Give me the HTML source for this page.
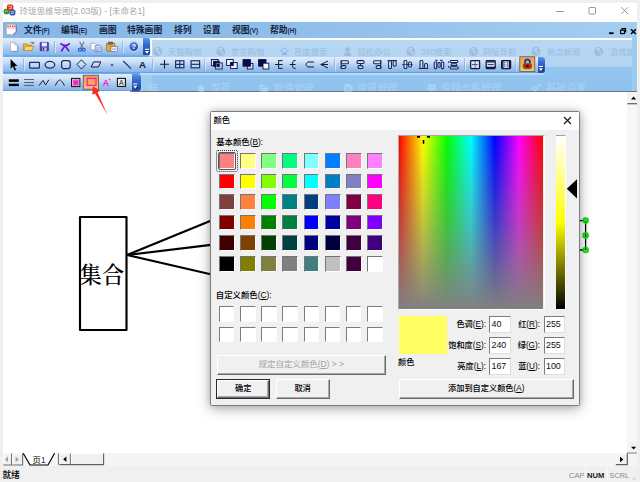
<!DOCTYPE html>
<html lang="zh">
<head>
<meta charset="utf-8">
<title>玲珑思维导图</title>
<style>
*{box-sizing:border-box;margin:0;padding:0}
html,body{width:640px;height:482px;overflow:hidden;background:#f0f0f0}
body{font-family:"Liberation Sans","Noto Sans CJK SC",sans-serif;font-size:9px;color:#000;position:relative}
#win{position:absolute;left:0;top:0;width:640px;height:482px;background:#efefef;overflow:hidden}
.ov{position:absolute;left:0;top:0;pointer-events:none}
#title{position:absolute;left:3px;top:3px;width:634px;height:19px;background:#fff}
#title .t{position:absolute;left:16.5px;top:2px;font-size:8.5px;color:#a6a6a6;white-space:nowrap;line-height:13px}
#title .t b{font-weight:normal;font-size:8.7px}
#menu{position:absolute;left:3px;top:22px;width:634px;height:16px;background:linear-gradient(90deg,#85b6e7 0%,#8fbeeb 45%,#a6cdf1 100%)}
#menu span{position:absolute;top:2px;font-size:8.8px;line-height:12px;color:#17233f;white-space:nowrap;font-weight:700}
#menu span i{font-style:normal;font-size:6.3px;font-weight:700;position:relative;top:0.4px}
#tbarea{position:absolute;left:3px;top:38px;width:634px;height:53px;background:#9fcaf0}
#wmpanel{position:absolute;left:149px;top:0;width:480px;height:53px;overflow:hidden;background:linear-gradient(180deg,#fff 0.6px,#fff 2.2px,#b7d7f3 2.4px,#b3d4f2 28.4px,#93c5f0 29px,#8fc2ef 53px)}
.wm{position:absolute;white-space:nowrap}
.wm1{color:#99bbdd;top:8.9px;font-size:8.3px;line-height:10px}
.wm2{color:#a4cef3;top:44.5px;font-size:10.1px;line-height:12px;font-weight:bold}
.tb{position:absolute;left:0;background:linear-gradient(180deg,#dfecfc 0%,#cde1f8 30%,#a9cbf1 60%,#86b5e9 100%);border-bottom:1px solid #6a9fdd;border-radius:0 3px 3px 0;box-shadow:0 1.5px 1.5px rgba(196,224,250,.85)}
.grip{position:absolute;top:0;width:7px;background:linear-gradient(180deg,#5f95e6 0%,#2f69cd 38%,#1a48ad 100%);border-radius:0 3px 3px 0}
#canvas{position:absolute;left:3px;top:91.3px;width:625px;height:361.7px;background:#fff}
#topline{position:absolute;left:130px;top:90.8px;width:507px;height:1.2px;background:#737373}
#vscroll{position:absolute;left:627.3px;top:92px;width:9.7px;height:361px;background:#f8f8f8}
#tabbar{position:absolute;left:3px;top:453px;width:634px;height:13px;background:#f5f5f5;z-index:3;background:transparent}
#tabbg{position:absolute;left:3px;top:453px;width:634px;height:13px;background:#f5f5f5}
#status{position:absolute;left:3px;top:466px;width:634px;height:16px;background:#f0f0f0}
#status span{position:absolute;font-size:7.6px;line-height:10px;white-space:nowrap}
/* dialog */
#dlg{position:absolute;left:210px;top:111px;width:370px;height:295px;background:#f0f0f0;border:1px solid #7d7d7d;border-radius:1.5px;box-shadow:0 3px 13px rgba(0,0,0,.3),0 0 6px rgba(0,0,0,.16)}
#dlg .in{position:absolute;left:-211px;top:-112px;width:0;height:0}
#dlg .cap{position:absolute;left:211px;top:112px;width:368px;height:18px;background:#fff}
.lbl{position:absolute;font-size:8.2px;line-height:11px;white-space:nowrap;color:#000;font-weight:500}
.lbl u{text-decoration:underline;text-underline-offset:1px}
.lbl.r{text-align:right}
.sw{position:absolute;width:15.9px;height:15.9px;border:1px solid;border-color:#74747e #fdfdfd #fdfdfd #74747e}
.sw.cu{width:15.6px;height:15.7px;border-width:1.5px 1px 1px 1.5px;border-color:#7c7c7c #fdfdfd #fdfdfd #7c7c7c}
.sel{position:absolute;left:218px;top:152px;width:17.8px;height:18.3px;border:1.6px solid #505357;border-radius:2px}
.btn{position:absolute;background:#f0f0f0;border-style:solid;border-width:1px 1.5px 1.5px 1px;border-color:#fff #6a6a6a #6a6a6a #fff;font-size:8.2px;font-weight:500;text-align:center;white-space:nowrap;color:#000;box-shadow:inset -1px -1px 0 #a8a8a8}
.btn.def{outline:1px solid #2a2a2a}
.btn.dis{color:#a3a3a3;font-weight:400;font-size:8.45px}
.edit{position:absolute;background:#fff;border-style:solid;border-width:1.4px 1px 1px 1.4px;border-color:#7c7c7c #dedede #dedede #7c7c7c;font-size:8.9px;line-height:15.4px;padding-left:1.5px;white-space:nowrap;color:#111}

#wml{position:absolute;left:147.2px;top:0.2px;width:2px;height:17.6px;background:#f6fafe}
.gap{position:absolute;left:0;background:#6fa9e7}

</style>
</head>
<body>
<div id="win">
  <div id="title"><span class="t">玲珑思维导图<b>(2.03</b>版<b>) - [</b>未命名<b>1]</b></span></div>
  <div id="menu">
    <span style="left:21px">文件<i>(F)</i></span>
    <span style="left:58px">编辑<i>(E)</i></span>
    <span style="left:96px">画图</span>
    <span style="left:124px">特殊画图</span>
    <span style="left:171px">排列</span>
    <span style="left:200px">设置</span>
    <span style="left:229px">视图<i>(V)</i></span>
    <span style="left:267px">帮助<i>(H)</i></span>
  </div>
  <div id="tbarea">
    <div id="wmpanel">
      <span class="wm wm1" style="left:16.0px">天猫购物</span>
      <span class="wm wm1" style="left:79.0px">京东购物</span>
      <span class="wm wm1" style="left:142.0px">百度搜索</span>
      <span class="wm wm1" style="left:205.5px">轻松办公</span>
      <span class="wm wm1" style="left:269.0px">360搜索</span>
      <span class="wm wm1" style="left:331.0px">网址导航</span>
      <span class="wm wm1" style="left:395.0px">热点新闻</span>
      <span class="wm wm1" style="left:458.0px">游戏娱乐</span>
      <span class="wm wm2" style="left:58.5px">首页</span>
      <span class="wm wm2" style="left:121.8px">软件管理</span>
      <span class="wm wm2" style="left:205.0px">资讯管理</span>
      <span class="wm wm2" style="left:288.5px">专题合集管理</span>
      <span class="wm wm2" style="left:394.0px">基础设置</span>
    </div>
    <div id="wml"></div>
    <div class="tb" id="tb1" style="top:0;width:147px;height:17.6px"><div class="grip" style="left:140px;height:17.2px"></div></div>
    <div class="tb" id="tb2" style="top:18.6px;width:542px;height:16.8px"><div class="grip" style="left:535px;height:16.4px"></div></div>
    <div class="tb" id="tb3" style="top:36.4px;width:138px;height:16.8px"><div class="grip" style="left:128.5px;width:9.5px;height:16.6px"></div></div>
    <div class="gap" style="top:16.8px;width:146px;height:1.9px"></div>
    <div class="gap" style="top:34.6px;width:137px;height:1.9px"></div>
  </div>
  <div id="canvas"></div>
  <div id="vscroll"></div>
  <div id="topline"></div>
  <div id="tabbg"></div>
  <div id="tabbar">
    <span style="position:absolute;left:29.6px;top:1.6px;font-size:8.3px;line-height:10px;z-index:3">页<b style="font-weight:500;color:#1d1d4a">1</b></span>
  </div>
  <div id="status">
    <span style="left:-0.6px;top:4.3px;font-size:8.7px;font-weight:500">就绪</span>
    <span style="left:566px;top:5px;color:#8a8a8a">CAP</span>
    <span style="left:584px;top:5px;color:#1a1a2a;font-weight:bold">NUM</span>
    <span style="left:606.6px;top:5px;color:#8a8a8a;font-size:7.3px">SCRL</span>
  </div>

<svg id="icons" class="ov" width="640" height="482" viewBox="0 0 640 482">
<defs>
  <linearGradient id="og" x1="0" y1="0" x2="0" y2="1"><stop offset="0" stop-color="#f2a043"/><stop offset="0.5" stop-color="#f6ad4c"/><stop offset="1" stop-color="#f9c878"/></linearGradient>
  <radialGradient id="hg" cx="0.4" cy="0.35" r="0.7"><stop offset="0" stop-color="#5a8df0"/><stop offset="1" stop-color="#1440a8"/></radialGradient>
  <linearGradient id="sepg" x1="0" y1="0" x2="0" y2="1"><stop offset="0" stop-color="#8aa9d6"/><stop offset="1" stop-color="#5f86c4"/></linearGradient>
</defs>
<!-- watermark icons -->
<g id="wmicons">
<circle cx="157.6" cy="51.6" r="4.5" fill="#9cbddd"/><path d="M155.0 50.2 q1.4 -2.6 3.6 -1.6 q-0.4 1.6 -2 1.8 q0.2 1.8 2.6 1.6 q1 1.4 -0.4 2.6" stroke="#c4dcf3" stroke-width="1" fill="none"/>
<circle cx="220.8" cy="51.6" r="4.5" fill="#9cbddd"/><path d="M218.2 50.2 q1.4 -2.6 3.6 -1.6 q-0.4 1.6 -2 1.8 q0.2 1.8 2.6 1.6 q1 1.4 -0.4 2.6" stroke="#c4dcf3" stroke-width="1" fill="none"/>
<circle cx="410.8" cy="51.6" r="4.5" fill="#9cbddd"/><path d="M408.2 50.2 q1.4 -2.6 3.6 -1.6 q-0.4 1.6 -2 1.8 q0.2 1.8 2.6 1.6 q1 1.4 -0.4 2.6" stroke="#c4dcf3" stroke-width="1" fill="none"/>
<circle cx="473.4" cy="51.6" r="4.5" fill="#9cbddd"/><path d="M470.8 50.2 q1.4 -2.6 3.6 -1.6 q-0.4 1.6 -2 1.8 q0.2 1.8 2.6 1.6 q1 1.4 -0.4 2.6" stroke="#c4dcf3" stroke-width="1" fill="none"/>
<circle cx="536.0" cy="51.6" r="4.5" fill="#9cbddd"/><path d="M533.4 50.2 q1.4 -2.6 3.6 -1.6 q-0.4 1.6 -2 1.8 q0.2 1.8 2.6 1.6 q1 1.4 -0.4 2.6" stroke="#c4dcf3" stroke-width="1" fill="none"/>
<circle cx="598.6" cy="51.6" r="4.5" fill="#9cbddd"/><path d="M596.0 50.2 q1.4 -2.6 3.6 -1.6 q-0.4 1.6 -2 1.8 q0.2 1.8 2.6 1.6 q1 1.4 -0.4 2.6" stroke="#c4dcf3" stroke-width="1" fill="none"/>
<g fill="#93b4ea"><circle cx="281.4" cy="51" r="1"/><circle cx="283.2" cy="48.6" r="1"/><circle cx="285.8" cy="48.6" r="1"/><circle cx="287.6" cy="51" r="1"/><path d="M281.8 54.8 q0.4 -3 2.7 -3 q2.3 0 2.7 3 q-1.2 1.2 -2.7 0.2 q-1.5 1 -2.7 -0.2z"/></g>
<g fill="#9cbddd"><circle cx="347.6" cy="49.6" r="2.3"/><path d="M343.8 56 q0.2 -4 3.8 -4 q3.6 0 3.8 4z"/></g>
<g fill="#acd2f5" stroke="none">
<rect x="146" y="84.2" width="11" height="1.5"/><rect x="149" y="86.8" width="8" height="1.5"/><rect x="149" y="89.3" width="8" height="1.5"/><rect x="146" y="86.8" width="1.8" height="1.5"/>
<path d="M197 88.4 L201.2 84.2 L205.4 88.4 H204 V91.5 H198.4 V88.4 Z"/>
<path d="M259.4 84.6 H262.6 L263.6 85.8 H267.4 V87 H261.2 L259.4 91.5 Z M261.8 87.8 H269.4 L267.6 91.5 H260.2 Z"/>
<path d="M344.4 84 H349.6 L352.4 86.8 V91.5 H344.4 Z"/>
<path d="M427.6 85.4 q0 -1.2 1.2 -1.2 h5.6 q1.2 0 1.2 1.2 v3.8 q0 1.2 -1.2 1.2 h-1.6 l-1.4 1.2 l-1 -1.2 h-1.6 q-1.2 0 -1.2 -1.2z"/>
<circle cx="535" cy="88.6" r="2.6"/><circle cx="539.4" cy="85.4" r="1.8"/>
</g>
<g fill="#8fc2ef"><circle cx="535" cy="88.6" r="1"/><circle cx="539.4" cy="85.4" r="0.7"/><rect x="346" y="87.6" width="4.6" height="0.9"/><rect x="346" y="89.4" width="4.6" height="0.9"/><path d="M429.8 86.6 l1.8 1.8 l1.8 -1.8" stroke="#8fc2ef" stroke-width="0.9" fill="none"/></g>
</g>
<!-- app icon -->
<g>
  <rect x="3.7" y="8.7" width="5.6" height="5.5" rx="1.6" fill="#3c962c"/>
  <rect x="9.4" y="9.5" width="6" height="5.9" rx="1.7" fill="#2a62b4"/>
  <rect x="6.9" y="4.6" width="6.5" height="5.9" rx="1.7" fill="#d9301f"/>
  <path d="M8.6 6.6 H11.6 V8.4 H8.8" stroke="#f7c6bf" stroke-width="0.8" fill="none"/>
  <path d="M5 11.8 L6.4 10.6 L7.8 11.8" stroke="#b4e2a6" stroke-width="0.8" fill="none"/>
  <path d="M11.2 13.4 V11.6 H13.4 V13.4 Z" stroke="#a9c8f2" stroke-width="0.8" fill="none"/>
  <path d="M7.4 5.2 Q10 4.6 12.8 5.2" stroke="#f08a7c" stroke-width="0.7" fill="none"/>
</g>
<!-- window buttons -->
<g stroke="#9a9a9a" stroke-width="1" fill="none">
  <path d="M556 11.5 H564"/>
  <rect x="589" y="7.5" width="6.5" height="6.5" rx="0.6"/>
  <path d="M621.3 7.3 L628 14 M628 7.3 L621.3 14"/>
</g>
<!-- mdi doc icon -->
<g>
  <path d="M6.2 24.2 H16 V32 Q14 33.4 12.6 35.4 Q10 34 6.2 35 Z" fill="#fcfcfd" stroke="#8f98aa" stroke-width="0.7"/>
  <path d="M16.4 25 V32.4 Q14.4 33.8 13 35.8" fill="none" stroke="#6c7486" stroke-width="0.8"/>
  <path d="M7.2 25.4 h1.6 v1.8 h-1.6z M9.6 25.4 h1.6 v1.8 h-1.6z M12 25.4 h1.6 v1.8 h-1.6z M14.2 25.4 h1.2 v1.8 h-1.2z" fill="#e5483e"/>
  <path d="M7.2 28.4 H15.2" stroke="#f0a8a2" stroke-width="0.7"/>
  <path d="M12.6 35.4 Q12.4 33 16 32 Z" fill="#cdd4e0" stroke="#8f98aa" stroke-width="0.5"/>
</g>
<!-- mdi buttons -->
<g stroke="#000" fill="none">
  <path d="M609 33.2 H613.6" stroke-width="1.8"/>
  <rect x="620.6" y="30.2" width="3.8" height="3.4" stroke-width="1.1"/>
  <path d="M622 30 V28.6 H625.6 V32 H624.6" stroke-width="1.1"/>
  <path d="M631 29.2 L635.8 34 M635.8 29.2 L631 34" stroke-width="1.5"/>
</g>

<!-- ===== toolbar 1 ===== -->
<g>
  <!-- new -->
  <path d="M10.5 42.4 H14.8 L17.3 44.9 V51.1 H10.5 Z" fill="#fff" stroke="#9aa3b8" stroke-width="0.6"/>
  <path d="M14.8 42.4 V44.9 H17.3 Z" fill="#d5dbe8" stroke="#9aa3b8" stroke-width="0.5"/>
  <path d="M17.8 45.4 V51.6 H11.2" stroke="#7d8598" stroke-width="0.8" fill="none" opacity=".75"/>
  <!-- open -->
  <path d="M23.4 50.5 V43.8 H26.6 L27.6 44.9 H31.8 V46.4" fill="#e9b738" stroke="#a87516" stroke-width="0.6"/>
  <path d="M23.4 50.5 L25.6 46.3 H34 L31.8 50.5 Z" fill="#fcd669" stroke="#a87516" stroke-width="0.6"/>
  <path d="M30.2 42.6 Q32 41.6 33.4 43 M33.6 41.8 V43.4 H32" stroke="#25408c" stroke-width="0.6" fill="none"/>
  <!-- save -->
  <rect x="40" y="42.3" width="8.6" height="8.6" rx="0.6" fill="#4c43c6" stroke="#2e2890" stroke-width="0.5"/>
  <rect x="41.7" y="42.6" width="5.2" height="3.8" fill="#eceefa"/>
  <rect x="42.2" y="47.6" width="4.3" height="3.2" fill="#c9cbdc"/>
  <rect x="42.8" y="48.1" width="1.4" height="2.3" fill="#2a2a3a"/>
  <!-- sep -->
  <path d="M54.5 41 V52.5" stroke="#7fa0d0" stroke-width="0.8"/><path d="M55.3 41.5 V53" stroke="#eaf3fd" stroke-width="0.8"/>
  <!-- purple cut -->
  <g stroke="#6a12d8" stroke-width="1.6" fill="none" stroke-linecap="round">
    <path d="M60.9 43.7 Q65.1 47.6 69.4 43.7"/>
    <path d="M65.1 45.6 L61.6 50.8 M65.1 45.6 L68.7 50.8"/>
  </g>
  <!-- scissors -->
  <path d="M79.6 41.8 L83.2 48.4 M84 41.8 L80.4 48.4" stroke="#6a7488" stroke-width="1.1" fill="none"/>
  <circle cx="79.9" cy="49.8" r="1.5" stroke="#2352c8" stroke-width="1.1" fill="none"/>
  <circle cx="83.7" cy="49.8" r="1.5" stroke="#2352c8" stroke-width="1.1" fill="none"/>
  <!-- copy -->
  <path d="M91 43.2 H95.2 L96.8 44.8 V49.8 H91 Z" fill="#fff" stroke="#7d91bc" stroke-width="0.6"/>
  <path d="M95 45.4 H99.3 L101 47 V51.6 H95 Z" fill="#e2eafb" stroke="#4563a8" stroke-width="0.6"/>
  <path d="M96 47.8 H99.8 M96 49.2 H99.8 M96 50.4 H98.6" stroke="#4a6bc0" stroke-width="0.5"/>
  <!-- paste -->
  <rect x="106.5" y="43" width="8.4" height="8.2" rx="0.6" fill="#e2a831" stroke="#93610f" stroke-width="0.6"/>
  <rect x="108.6" y="42" width="4.2" height="2.2" fill="#6b6b70" stroke="#444" stroke-width="0.4"/>
  <rect x="111" y="46.6" width="6.6" height="5" fill="#fdfdff" stroke="#4e66a2" stroke-width="0.6"/>
  <path d="M112 48.2 H116.6 M112 49.6 H116.6" stroke="#5a78c0" stroke-width="0.5"/>
  <!-- sep -->
  <path d="M122.5 41 V52.5" stroke="#7fa0d0" stroke-width="0.8"/><path d="M123.3 41.5 V53" stroke="#eaf3fd" stroke-width="0.8"/>
  <!-- help -->
  <circle cx="133.7" cy="46.6" r="5.3" fill="#dfe8f7" stroke="#b4c4e0" stroke-width="0.5"/>
  <circle cx="133.7" cy="46.6" r="4.3" fill="url(#hg)"/>
  <text x="133.7" y="49.4" text-anchor="middle" font-family="'Liberation Sans',sans-serif" font-weight="bold" font-size="7.6" fill="#fff">?</text>
  <!-- grip arrow -->
  <path d="M145.6 50 H149.8 M145.6 52 H149.8 L147.7 54.6" stroke="#0a1a50" stroke-width="0.8" fill="none"/>
  <path d="M145 49.3 H149.2" stroke="#fff" stroke-width="1.1"/><path d="M145 51 H149.2 L147.1 53.8 Z" fill="#fff"/>
</g>

<!-- ===== toolbar 2 ===== -->
<g>
  <path d="M10.6 59 V68.7 L12.9 66.6 L14.6 70.4 L16.1 69.7 L14.4 66 L17.4 65.9 Z" fill="#000"/>
  <path d="M23.6 58.5 V70" stroke="#7fa0d0" stroke-width="0.8"/><path d="M24.4 59 V70.5" stroke="#eaf3fd" stroke-width="0.8"/>
  <g stroke="#1f2c68" stroke-width="1.25" fill="rgba(255,255,255,.18)" stroke-linejoin="round">
    <rect x="29.6" y="62.3" width="9.8" height="5.7" rx="0.5"/>
    <ellipse cx="49.9" cy="64.8" rx="4.8" ry="3.4"/>
    <rect x="61.6" y="60.6" width="8.6" height="7.9" rx="2.2"/>
    <path d="M81.4 59.8 L85.8 64.4 L81.4 69 L77 64.4 Z" stroke-width="0.95" stroke="#1a1d3e"/>
    <path d="M93.6 61.9 H100.8 L98.4 67 H91.2 Z" stroke-width="1" stroke="#1a1d3e"/>
  </g>
  <path d="M112 63.5 L113.5 65 L112 66.5 L110.5 65 Z" fill="#4a5570"/>
  <path d="M123.2 61 L131 68.7" stroke="#1f2c68" stroke-width="1.1"/>
  <text x="142.5" y="68.2" text-anchor="middle" font-family="'Liberation Sans',sans-serif" font-weight="bold" font-size="9.7" fill="#12183f">A</text>
  <path d="M152.8 58.5 V70" stroke="#7fa0d0" stroke-width="0.8"/><path d="M153.6 59 V70.5" stroke="#eaf3fd" stroke-width="0.8"/>
  <path d="M164.5 60 V68.6 M160.1 64.3 H169" stroke="#1a1a2a" stroke-width="1.1" fill="none"/>
  <g stroke="#1f2c68" stroke-width="1.2" fill="rgba(255,255,255,.25)">
    <rect x="175.6" y="60.8" width="8.3" height="7"/><path d="M179.75 60.8 V67.8 M175.6 64.3 H183.9"/>
    <rect x="191.1" y="60.8" width="8.5" height="7"/><path d="M191.1 64.3 H199.6"/>
  </g>
  <path d="M204.8 58.5 V70" stroke="#7fa0d0" stroke-width="0.8"/><path d="M205.6 59 V70.5" stroke="#eaf3fd" stroke-width="0.8"/>
  <!-- order icons -->
  <g stroke="#10104a" stroke-width="0.9">
    <rect x="211.4" y="59.5" width="6.8" height="6.2" fill="#e9f1fc"/>
    <rect x="213.6" y="61.2" width="5.6" height="5.2" fill="#0b0b45"/>
    <rect x="216" y="63.4" width="6" height="5.4" fill="none" stroke="#e9f1fc" stroke-width="0.7"/>
    <rect x="215.6" y="63" width="6.6" height="6" fill="none"/>

    <rect x="226.6" y="59.5" width="6.6" height="6" fill="#e9f1fc"/>
    <rect x="230.6" y="62.6" width="6.6" height="6" fill="#e9f1fc"/>
    <rect x="230.6" y="62.6" width="2.6" height="2.9" fill="#0b0b45"/>

    <rect x="247.3" y="63.4" width="5.6" height="5.6" fill="#d5e4f8"/>
    <rect x="243" y="59.6" width="7.4" height="6.6" fill="#0b0b45"/>

    <rect x="258.6" y="59.6" width="7.4" height="6.6" fill="#0b0b45"/>
    <rect x="263" y="63.2" width="5.8" height="5.8" fill="#f4f8fe"/>
  </g>
  <!-- structure icons -->
  <g stroke="#1a1a2a" stroke-width="1" fill="none">
    <path d="M275 64.5 H278.6 M278.6 60.4 V68.6 M278.6 60.6 H282.6 M278.6 64.5 H282.6 M278.6 68.4 H282.6"/>
    <path d="M289.8 64.5 H292.4 M295.6 60.4 Q292.6 60.4 292.6 62.6 V66.4 Q292.6 68.6 295.6 68.6 M292.6 64.5 H295.6"/>
    <path d="M314 62 H307.8 Q304.2 64.5 307.8 67 H314"/>
    <path d="M328 61 L320.8 64.5 L328 68 M320.8 64.5 H328"/>
  </g>
  <path d="M334.6 58.5 V70" stroke="#7fa0d0" stroke-width="0.8"/><path d="M335.4 59 V70.5" stroke="#eaf3fd" stroke-width="0.8"/>
  <!-- align icons -->
  <g stroke="#1c2460" stroke-width="1.05" fill="rgba(255,255,255,.3)">
    <path d="M341.2 60 V69" /><rect x="341.2" y="60.8" width="7.2" height="2.9" rx="1"/><rect x="341.2" y="65.6" width="4.6" height="2.9" rx="1"/>
    <rect x="357" y="60.6" width="7" height="2.9" rx="1"/><rect x="358.1" y="65.6" width="4.8" height="2.9" rx="1"/><path d="M360.5 59.8 V60.6 M360.5 63.5 V65.6"/>
    <path d="M380.8 60 V69"/><rect x="373.6" y="60.8" width="7.2" height="2.9" rx="1"/><rect x="376.2" y="65.6" width="4.6" height="2.9" rx="1"/>
    <path d="M387.5 60.6 H397"/><rect x="388.6" y="60.6" width="2.9" height="7.9" rx="1"/><rect x="393.2" y="60.6" width="2.9" height="5.4" rx="1"/>
    <path d="M402.4 64.5 H412.6"/><rect x="404" y="60.5" width="2.9" height="8" rx="1"/><rect x="408.6" y="62" width="2.9" height="5" rx="1"/>
    <path d="M418.8 68.5 H428.2"/><rect x="420" y="60.5" width="2.9" height="8" rx="1"/><rect x="424.6" y="63.5" width="2.9" height="5" rx="1"/>
    <rect x="434.3" y="62" width="2.4" height="6.6" rx="0.8"/><rect x="437.9" y="62.6" width="2.2" height="4.6" rx="0.8"/><rect x="441.3" y="62" width="2.4" height="6.6" rx="0.8"/>
    <path d="M435.5 60.4 H437.6 M440.2 60.4 H442.4" stroke-width="1.2"/>
    <rect x="450.2" y="60.5" width="7.6" height="2" rx="0.8"/><rect x="451.2" y="63.7" width="5.6" height="1.9" rx="0.8"/><rect x="450.2" y="66.8" width="8" height="2.1" rx="0.8"/>
    <path d="M448.6 61.6 V62.8 M448.6 66 V67.4" stroke-width="1.2"/>
  </g>
  <path d="M464.6 58.5 V70" stroke="#7fa0d0" stroke-width="0.8"/><path d="M465.4 59 V70.5" stroke="#eaf3fd" stroke-width="0.8"/>
  <!-- same size icons -->
  <g stroke="#15153f" stroke-width="1.25" fill="rgba(255,255,255,.4)">
    <rect x="470.6" y="60.6" width="9" height="7.9" rx="0.8"/>
    <path d="M472.2 64.5 H478 M475.1 61.4 V67.8" stroke-width="0.9" stroke-dasharray="1.3 0.7"/>
    <rect x="486.2" y="60.6" width="9" height="7.9" rx="0.8"/>
    <path d="M486.2 61.8 H495.2 M486.2 67.3 H495.2" stroke-width="1.3"/>
    <path d="M487.8 64.5 H493.6" stroke-width="0.8"/>
    <rect x="501.6" y="60.6" width="9" height="7.9" rx="0.8"/>
    <path d="M502.8 60.6 V68.5 M509.4 60.6 V68.5" stroke-width="1.3"/>
    <path d="M504.8 61.6 V67.6 M507.4 61.6 V67.6" stroke-width="0.8" stroke-dasharray="1.2 0.8"/>
  </g>
  <path d="M515.8 58.5 V70" stroke="#7fa0d0" stroke-width="0.8"/><path d="M516.6 59 V70.5" stroke="#eaf3fd" stroke-width="0.8"/>
  <!-- lock button -->
  <rect x="519.8" y="56.8" width="15" height="14.8" fill="url(#og)" stroke="#5d5a66" stroke-width="0.8"/>
  <path d="M524.9 63.4 V62 a2.5 2.5 0 0 1 5 0 V63.4" stroke="#0a18f0" stroke-width="1.5" fill="none"/>
  <rect x="523.2" y="63.4" width="8.4" height="5.3" rx="2" fill="#e8100c" stroke="#0c9a28" stroke-width="1"/>
  <rect x="526.3" y="64.8" width="2.2" height="2.4" fill="#3a0606"/>
  <!-- grip arrow -->
  <path d="M539.4 67.2 H543.6 M539.4 69.2 H543.6 L541.5 71.8" stroke="#0a1a50" stroke-width="0.8" fill="none"/>
  <path d="M538.8 66.5 H543" stroke="#fff" stroke-width="1.1"/><path d="M538.8 68.2 H543 L540.9 71 Z" fill="#fff"/>
</g>

<!-- ===== toolbar 3 ===== -->
<g>
  <rect x="8.8" y="79.3" width="10" height="2.6" fill="#000"/><rect x="8.8" y="83.7" width="10" height="2.4" fill="#000"/>
  <path d="M24.2 79.5 H34 M24.2 82.5 H34 M24.2 85.4 H34" stroke="#3c4250" stroke-width="0.8"/>
  <path d="M39 85.6 L43 80.4 L45.6 85 L48.8 79.8" stroke="#1a1a2a" stroke-width="1" fill="none"/>
  <path d="M55.2 85.6 C57.4 81.4 58.8 80 59.8 80 C60.8 80 62.2 81.4 64.4 85.6" stroke="#1a1a2a" stroke-width="1" fill="none"/>
  <rect x="71.5" y="78.4" width="8.4" height="8.2" fill="#cbbfd0" stroke="#111" stroke-width="1"/>
  <path d="M73.2 80.2 L78.4 85 M78.4 80.2 L73.2 85 M75.8 79.6 V85.8 M73 82.6 H78.6" stroke="#ff18d8" stroke-width="1.3"/>
  <!-- selected -->
  <rect x="83.2" y="75.2" width="15.2" height="14" fill="url(#og)" stroke="#4e4e66" stroke-width="0.8"/>
  <rect x="87.2" y="78.3" width="8.8" height="7" fill="none" stroke="#ff14c4" stroke-width="1.2"/>
  <text x="105.9" y="85.6" text-anchor="middle" font-family="'Liberation Sans',sans-serif" font-weight="bold" font-size="8.8" fill="#ff14d8">A</text>
  <rect x="109" y="78.8" width="1.2" height="1.4" fill="#ff14d8"/>
  <rect x="118.2" y="79.2" width="8" height="8" fill="#7c8698" opacity=".6"/>
  <rect x="117.4" y="78.4" width="8" height="8" fill="#eef0f4" stroke="#111" stroke-width="1.1"/>
  <text x="121.4" y="85.3" text-anchor="middle" font-family="'Liberation Sans',sans-serif" font-size="7" fill="#111">A</text>
  <path d="M133.8 84.7 H138 M133.8 86.7 H138 L135.9 89.3" stroke="#0a1a50" stroke-width="0.8" fill="none"/>
  <path d="M133.2 84 H137.4" stroke="#fff" stroke-width="1.1"/><path d="M133.2 85.7 H137.4 L135.3 88.5 Z" fill="#fff"/>
</g>

</svg>
<svg id="shapes" class="ov" width="640" height="482" viewBox="0 0 640 482">
<g fill="none" stroke="#000" stroke-width="2.15" stroke-linejoin="round" stroke-linecap="round">
  <rect x="80" y="217" width="46.5" height="113"/>
  <path d="M127 255 L215 219"/>
  <path d="M127 255 L215 244.4"/>
  <path d="M127 255 L215 275.2"/>
</g>
<text x="101.8" y="282.6" text-anchor="middle" font-family="'Liberation Serif','Noto Serif CJK SC',serif" font-size="22.6" font-weight="500" fill="#000">集合</text>
<!-- red arrow -->
<g fill="#ff2a1f" stroke="none">
  <path d="M93 86.3 L99.9 90.7 L97.6 92.4 L107.6 115 L95.2 93.7 L92.2 94.5 Z"/>
</g>
<!-- green handles -->
<g>
  <path d="M585.6 221 V250 M580 220.6 H584 M580 250 H584" stroke="#000" stroke-width="1.3" fill="none"/>
  <circle cx="585.6" cy="220.6" r="2.5" fill="#0a7a0a" fill-opacity=".5" stroke="#00e400" stroke-width="1.6"/>
  <circle cx="585.6" cy="235.4" r="2.5" fill="#0a7a0a" fill-opacity=".5" stroke="#00e400" stroke-width="1.6"/>
  <circle cx="585.6" cy="250" r="2.5" fill="#0a7a0a" fill-opacity=".5" stroke="#00e400" stroke-width="1.6"/>
</g>

<!-- tab bar + scrollbars -->
<g>
  <!-- tab scroll buttons -->
  <rect x="3" y="453.4" width="19.6" height="11.6" fill="#f0f0f0"/>
  <path d="M3 465 H23 M11.6 453.6 V465 M22.6 453.6 V465" stroke="#6c6c6c" stroke-width="1.1" fill="none"/>
  <path d="M3.5 464.4 V453.9 H11 M12.6 464.4 V453.9 H22" stroke="#fff" stroke-width="0.9" fill="none"/>
  <path d="M8 456.6 V462.2 L5 459.4 Z" fill="#a0a0a0"/>
  <path d="M15.6 456.6 V462.2 L18.8 459.4 Z" fill="#a0a0a0"/>
  <!-- tab -->
  <path d="M23.2 453 L30 465.2 H48 L54.6 453 Z" fill="#fff"/>
  <path d="M23.2 453.2 L30 465 H48 L54.6 453.2" fill="none" stroke="#000" stroke-width="1.2"/>
  <!-- splitter -->
  <path d="M56.6 453.4 V465" stroke="#fff" stroke-width="1"/><path d="M58.6 453.4 V465" stroke="#6e6e6e" stroke-width="1.1"/>
  <rect x="57.1" y="453.4" width="1" height="11.6" fill="#dcdcdc"/>
  <!-- h scroll -->
  <rect x="59.6" y="453.6" width="44" height="11" fill="#f0f0f0"/>
  <path d="M59.6 464.6 H103.6 V453.6" fill="none" stroke="#5f5f5f" stroke-width="1.1"/>
  <path d="M70.4 453.6 V464.4" stroke="#6a6a6a" stroke-width="1"/>
  <path d="M60 464 V453.9 H70" fill="none" stroke="#fff" stroke-width="0.8"/>
  <path d="M71.4 464 V453.9 H103" fill="none" stroke="#fff" stroke-width="0.8"/>
  <path d="M66.4 456.6 V462 L63.2 459.3 Z" fill="#000"/>
  <!-- right arrow button -->
  <rect x="615.8" y="453.6" width="11.4" height="11" fill="#f0f0f0"/>
  <path d="M615.8 464.7 H627.3 V453.2" fill="none" stroke="#5f5f5f" stroke-width="1.2"/>
  <path d="M616.2 464 V454 H626.6" fill="none" stroke="#fff" stroke-width="0.8"/>
  <path d="M620 456.8 V462.2 L623.4 459.5 Z" fill="#000"/>
  <!-- vscroll bottom edge -->
  <path d="M627.3 452.8 H637" stroke="#5f5f5f" stroke-width="1.2"/>
    <rect x="627.3" y="92" width="9.7" height="11.4" fill="#f3f3f3"/><path d="M627.3 103.7 H637" stroke="#6a6a6a" stroke-width="1.3"/><rect x="627.3" y="441.5" width="9.7" height="11" fill="#f3f3f3"/>
  <path d="M631 99.4 H636.2 L633.6 96.5 Z" fill="#000"/>
  <path d="M631 446.8 H636.2 L633.6 449.6 Z" fill="#000"/>
  <!-- status separators + grip -->
  <path d="M585.2 468.5 V480 M607.4 468.5 V480" stroke="#fafafa" stroke-width="1"/>
  <g fill="#bdbdbd"><rect x="634.4" y="478.6" width="1" height="1"/><rect x="632.4" y="478.6" width="1" height="1"/><rect x="634.4" y="476.6" width="1" height="1"/></g>
</g>

</svg>
<div id="dlg"><div class="in">
  <div class="cap"></div>
  <span class="lbl" style="left:213.5px;top:115px;font-size:8.3px">颜色</span>
  <svg class="ov" style="left:561px;top:114px" width="14" height="14" viewBox="0 0 14 14"><path d="M3 3 L10 10 M10 3 L3 10" stroke="#111" stroke-width="1.1" fill="none"/></svg>
  <span class="lbl" style="left:216.2px;top:136.8px;font-size:8.4px">基本颜色(<u>B</u>):</span>
  <div style="position:absolute;left:216.4px;top:150.4px;width:21.2px;height:21.4px;border:1px dotted #333;border-radius:2px"></div>
<div class="sw" style="left:218.8px;top:152.9px;background:#FF8080"></div>
<div class="sw" style="left:240.0px;top:152.9px;background:#FFFF80"></div>
<div class="sw" style="left:261.1px;top:152.9px;background:#80FF80"></div>
<div class="sw" style="left:282.3px;top:152.9px;background:#00FF80"></div>
<div class="sw" style="left:303.5px;top:152.9px;background:#80FFFF"></div>
<div class="sw" style="left:324.7px;top:152.9px;background:#0080FF"></div>
<div class="sw" style="left:345.8px;top:152.9px;background:#FF80C0"></div>
<div class="sw" style="left:367.0px;top:152.9px;background:#FF80FF"></div>
<div class="sw" style="left:218.8px;top:173.5px;background:#FF0000"></div>
<div class="sw" style="left:240.0px;top:173.5px;background:#FFFF00"></div>
<div class="sw" style="left:261.1px;top:173.5px;background:#80FF00"></div>
<div class="sw" style="left:282.3px;top:173.5px;background:#00FF40"></div>
<div class="sw" style="left:303.5px;top:173.5px;background:#00FFFF"></div>
<div class="sw" style="left:324.7px;top:173.5px;background:#0080C0"></div>
<div class="sw" style="left:345.8px;top:173.5px;background:#8080C0"></div>
<div class="sw" style="left:367.0px;top:173.5px;background:#FF00FF"></div>
<div class="sw" style="left:218.8px;top:194.0px;background:#804040"></div>
<div class="sw" style="left:240.0px;top:194.0px;background:#FF8040"></div>
<div class="sw" style="left:261.1px;top:194.0px;background:#00FF00"></div>
<div class="sw" style="left:282.3px;top:194.0px;background:#008080"></div>
<div class="sw" style="left:303.5px;top:194.0px;background:#004080"></div>
<div class="sw" style="left:324.7px;top:194.0px;background:#8080FF"></div>
<div class="sw" style="left:345.8px;top:194.0px;background:#800040"></div>
<div class="sw" style="left:367.0px;top:194.0px;background:#FF0080"></div>
<div class="sw" style="left:218.8px;top:214.6px;background:#800000"></div>
<div class="sw" style="left:240.0px;top:214.6px;background:#FF8000"></div>
<div class="sw" style="left:261.1px;top:214.6px;background:#008000"></div>
<div class="sw" style="left:282.3px;top:214.6px;background:#008040"></div>
<div class="sw" style="left:303.5px;top:214.6px;background:#0000FF"></div>
<div class="sw" style="left:324.7px;top:214.6px;background:#0000A0"></div>
<div class="sw" style="left:345.8px;top:214.6px;background:#800080"></div>
<div class="sw" style="left:367.0px;top:214.6px;background:#8000FF"></div>
<div class="sw" style="left:218.8px;top:235.1px;background:#400000"></div>
<div class="sw" style="left:240.0px;top:235.1px;background:#804000"></div>
<div class="sw" style="left:261.1px;top:235.1px;background:#004000"></div>
<div class="sw" style="left:282.3px;top:235.1px;background:#004040"></div>
<div class="sw" style="left:303.5px;top:235.1px;background:#000080"></div>
<div class="sw" style="left:324.7px;top:235.1px;background:#000040"></div>
<div class="sw" style="left:345.8px;top:235.1px;background:#400040"></div>
<div class="sw" style="left:367.0px;top:235.1px;background:#400080"></div>
<div class="sw" style="left:218.8px;top:255.7px;background:#000000"></div>
<div class="sw" style="left:240.0px;top:255.7px;background:#808000"></div>
<div class="sw" style="left:261.1px;top:255.7px;background:#808040"></div>
<div class="sw" style="left:282.3px;top:255.7px;background:#808080"></div>
<div class="sw" style="left:303.5px;top:255.7px;background:#408080"></div>
<div class="sw" style="left:324.7px;top:255.7px;background:#C0C0C0"></div>
<div class="sw" style="left:345.8px;top:255.7px;background:#400040"></div>
<div class="sw" style="left:367.0px;top:255.7px;background:#FFFFFF"></div>
<div class="sw cu" style="left:218.8px;top:305.9px;background:#fff"></div>
<div class="sw cu" style="left:240.0px;top:305.9px;background:#fff"></div>
<div class="sw cu" style="left:261.1px;top:305.9px;background:#fff"></div>
<div class="sw cu" style="left:282.3px;top:305.9px;background:#fff"></div>
<div class="sw cu" style="left:303.5px;top:305.9px;background:#fff"></div>
<div class="sw cu" style="left:324.7px;top:305.9px;background:#fff"></div>
<div class="sw cu" style="left:345.8px;top:305.9px;background:#fff"></div>
<div class="sw cu" style="left:367.0px;top:305.9px;background:#fff"></div>
<div class="sw cu" style="left:218.8px;top:326.5px;background:#fff"></div>
<div class="sw cu" style="left:240.0px;top:326.5px;background:#fff"></div>
<div class="sw cu" style="left:261.1px;top:326.5px;background:#fff"></div>
<div class="sw cu" style="left:282.3px;top:326.5px;background:#fff"></div>
<div class="sw cu" style="left:303.5px;top:326.5px;background:#fff"></div>
<div class="sw cu" style="left:324.7px;top:326.5px;background:#fff"></div>
<div class="sw cu" style="left:345.8px;top:326.5px;background:#fff"></div>
<div class="sw cu" style="left:367.0px;top:326.5px;background:#fff"></div>
  <div class="sel"></div>
  <span class="lbl" style="left:215.8px;top:289.6px;font-size:8.4px">自定义颜色(<u>C</u>):</span>
  <div class="btn dis" style="left:216.5px;top:355px;width:169.5px;height:20px;line-height:17px">规定自定义颜色(<u>D</u>) &gt; &gt;</div>
  <div class="btn def" style="left:217.2px;top:379.5px;width:52px;height:18.5px;line-height:16px">确定</div>
  <div class="btn" style="left:275.6px;top:378.8px;width:54px;height:20px;line-height:17px">取消</div>
  <!-- spectrum -->
  <div style="position:absolute;left:398px;top:135.4px;width:147px;height:175px;border:1px solid;border-color:#a8a8a8 #fff #fff #a8a8a8"></div>
  <div id="spec" style="position:absolute;left:398.8px;top:136.2px;width:144.7px;height:173px;background:linear-gradient(180deg,rgba(128,128,128,0) 0%,rgba(128,128,128,.46) 50%,rgba(128,128,128,.73) 75%,rgba(128,128,128,1) 100%),linear-gradient(90deg,#f00 0%,#ff0 16.67%,#0f0 33.33%,#0ff 50%,#00f 66.67%,#f0f 83.33%,#f00 100%)"></div>
  <svg class="ov" style="left:414px;top:134px" width="20" height="12" viewBox="0 0 20 12"><path d="M3 2.9 H6 M13 2.9 H16 M9.5 6 V9.8" stroke="#000" stroke-width="1.6" fill="none"/></svg>
  <div style="position:absolute;left:555.6px;top:135.4px;width:10.8px;height:175px;border:1px solid;border-color:#a0a0a0 #fff #fff #a0a0a0"></div>
  <div id="lum" style="position:absolute;left:556.4px;top:136.2px;width:9px;height:173px;background:linear-gradient(180deg,#fff 0%,#ff0 50%,#000 100%)"></div>
  <svg class="ov" style="left:566px;top:178px" width="12" height="22" viewBox="0 0 12 22"><path d="M0.8 10.8 L11 1.3 V20.4 Z" fill="#000"/></svg>
  <div style="position:absolute;left:399px;top:316px;width:47.8px;height:37.5px;background:#ffff64"></div>
  <span class="lbl" style="left:398px;top:357px">颜色</span>
  <span class="lbl r" style="left:436px;width:50px;top:319px">色调(<u>E</u>):</span>
  <span class="lbl r" style="left:436px;width:50px;top:340px">饱和度(<u>S</u>):</span>
  <span class="lbl r" style="left:436px;width:50px;top:361px">亮度(<u>L</u>):</span>
  <div class="edit" style="left:489px;top:316px;width:21.5px;height:16.5px">40</div>
  <div class="edit" style="left:489px;top:337px;width:21.5px;height:16.5px">240</div>
  <div class="edit" style="left:489px;top:358px;width:21.5px;height:16.5px">167</div>
  <span class="lbl r" style="left:500px;width:40px;top:319px">红(<u>R</u>):</span>
  <span class="lbl r" style="left:500px;width:40px;top:340px">绿(<u>G</u>):</span>
  <span class="lbl r" style="left:500px;width:40px;top:361px">蓝(<u>U</u>):</span>
  <div class="edit" style="left:543.5px;top:316px;width:21.5px;height:16.5px">255</div>
  <div class="edit" style="left:543.5px;top:337px;width:21.5px;height:16.5px">255</div>
  <div class="edit" style="left:543.5px;top:358px;width:21.5px;height:16.5px">100</div>
  <div class="btn" style="left:398.5px;top:378.8px;width:175.5px;height:20px;line-height:17px">添加到自定义颜色(<u>A</u>)</div>
</div></div>

</div>
</body>
</html>
